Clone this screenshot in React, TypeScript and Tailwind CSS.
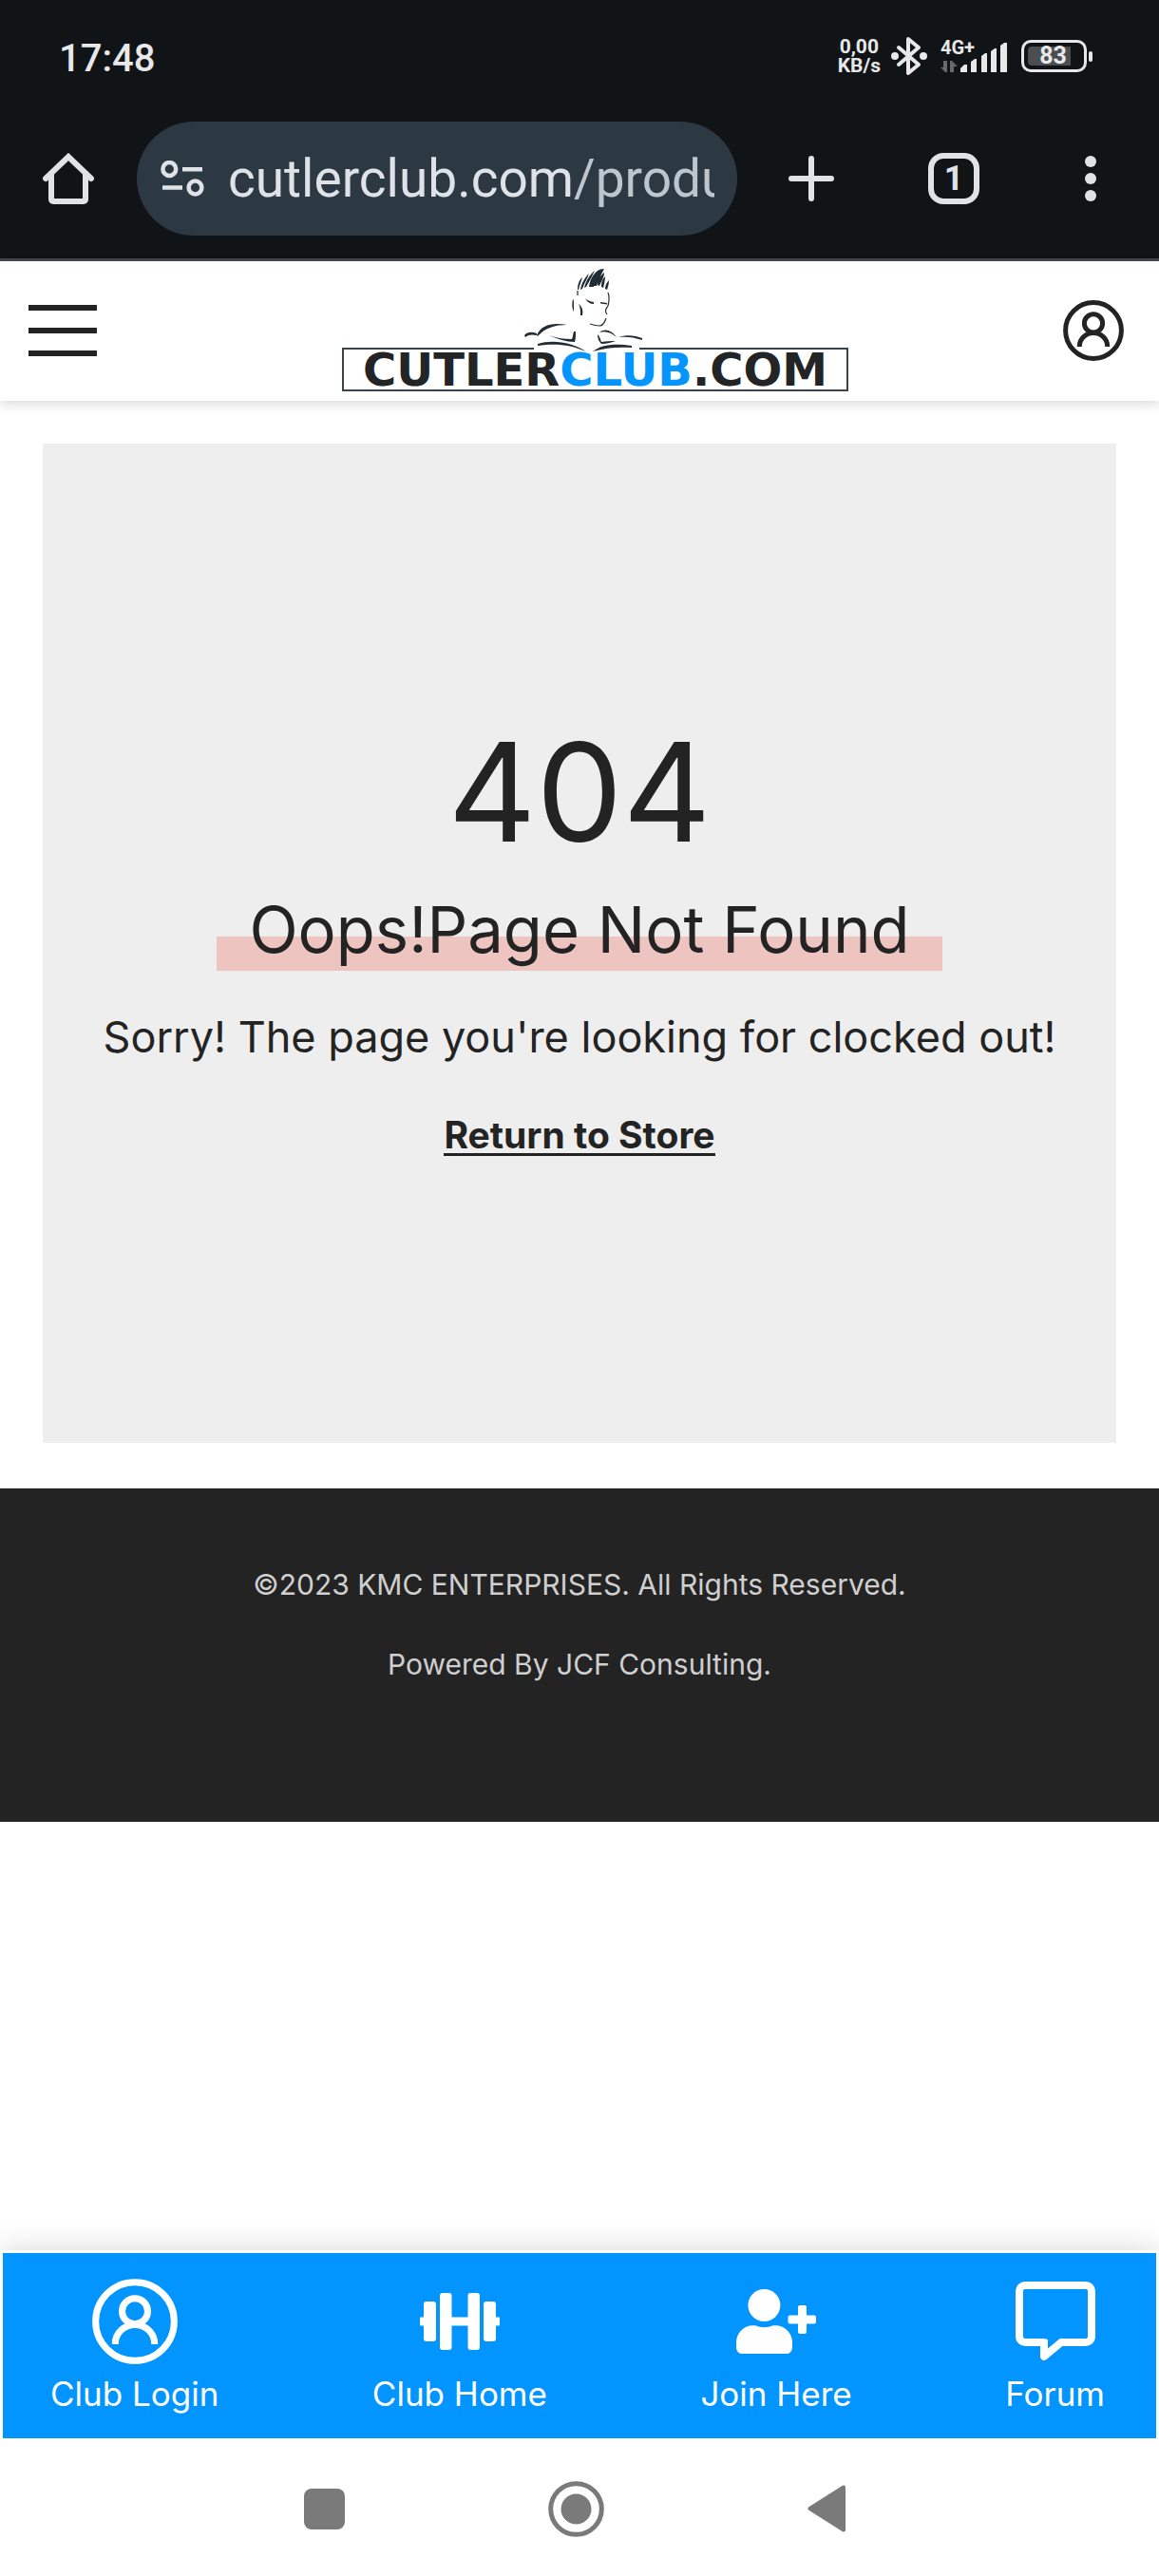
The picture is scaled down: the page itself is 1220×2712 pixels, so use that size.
import React from "react";

function AccountIcon({ className }: { className: string }) {
  return (
    <svg viewBox="0 0 64 64" fill="none" stroke="currentColor" strokeWidth="5" className={className} aria-hidden="true">
      <circle cx="32" cy="32" r="29.4" />
      <circle cx="32" cy="24.4" r="9.6" />
      <path d="M17.3 49v-0.5a14.7 14 0 0 1 29.4 0v0.5" />
    </svg>
  );
}

function DumbbellIcon() {
  return (
    <svg width="84" height="60" viewBox="0 0 84 60" fill="currentColor" aria-hidden="true">
      <rect x="0" y="25.5" width="6" height="9" rx="1" />
      <rect x="4" y="9" width="13" height="42" rx="3" />
      <rect x="21" y="0" width="12.5" height="60" rx="3" />
      <rect x="32" y="25.5" width="20" height="9" />
      <rect x="50.5" y="0" width="12.5" height="60" rx="3" />
      <rect x="67" y="9" width="13" height="42" rx="3" />
      <rect x="78" y="25.5" width="6" height="9" rx="1" />
    </svg>
  );
}

function UserPlusIcon() {
  return (
    <svg width="84" height="68" viewBox="0 0 84 68" fill="currentColor" aria-hidden="true">
      <circle cx="29.4" cy="17" r="17" />
      <path d="M17.6 38.2h2.3a23 23 0 0 0 19 0h2.3A17.7 17.7 0 0 1 59 56v5.7a6.3 6.3 0 0 1-6.3 6.3H6.3A6.3 6.3 0 0 1 0 61.700V56a17.7 17.7 0 0 1 17.6-17.8z" />
      <rect x="65" y="17" width="9" height="30" rx="2" />
      <rect x="54.5" y="27.5" width="29.5" height="9" rx="2" />
    </svg>
  );
}

function ForumIcon() {
  return (
    <svg width="84" height="84" viewBox="0 0 84 84" fill="none" stroke="currentColor" strokeWidth="8" aria-hidden="true">
      <path d="M10 4h64a6 6 0 0 1 6 6v48a6 6 0 0 1-6 6H48L30 79V64H10a6 6 0 0 1-6-6V10a6 6 0 0 1 6-6z" strokeLinejoin="round" />
      <path d="M30 61v18" />
    </svg>
  );
}

const navItems = [
  { label: "Club Login", icon: <AccountIcon className="size-[90px]" /> },
  { label: "Club Home", icon: <DumbbellIcon /> },
  { label: "Join Here", icon: <UserPlusIcon /> },
  { label: "Forum", icon: <ForumIcon /> },
];

function StatusBar() {
  return (
    <div className="flex h-20 items-start justify-between pt-[38px] pr-[70px] pl-[62px] text-[#e8e8e8]">
      <time className="text-[40px] leading-[48px] font-medium">17:48</time>
      <div className="flex h-[42px] items-center">
        <div className="mr-[11px] text-center text-[21px] leading-5 font-bold">
          <div>0,00</div>
          <div>KB/s</div>
        </div>
        <svg width="38" height="42" viewBox="0 0 38 42" fill="none" stroke="currentColor" strokeWidth="4" strokeLinejoin="round" strokeLinecap="round" aria-hidden="true">
          <path d="M8 12l21 18-11 9V3l11 9L8 30" />
          <circle cx="4" cy="21" r="2" fill="currentColor" />
          <circle cx="34" cy="21" r="2" fill="currentColor" />
        </svg>
        {/* Mobile signal */}
        <div className="relative ml-[14px] h-[42px] w-[70px]">
          <span className="absolute top-0.5 left-0 text-[20px] leading-5 font-bold">4G+</span>
          <svg width="70" height="42" viewBox="0 0 70 42" fill="currentColor" aria-hidden="true">
            <path d="M0 33h3v-7h4v12H5zM10 38V26h2l6 6h-4v6z" opacity="0.4" />
            <path d="M21 38v-4l4-4h3v8zM32 38V27l4-3h2v14zM43 38V21l4-3h2v20zM53 38V16l4-3h2v25zM63 38V10l4-3h3v31z" />
          </svg>
        </div>
        {/* Battery */}
        <div className="ml-[15px] flex items-center gap-0.5">
          <div className="flex h-[34px] w-[69px] items-center rounded-[10px] border-[3px] border-current p-1">
            <div className="h-5 w-[45px] rounded-l-sm bg-[#4b4e50] text-center text-[25px] leading-5 font-bold">
              <span className="pl-2">83</span>
            </div>
          </div>
          <div className="h-[11px] w-1 rounded-full bg-current" />
        </div>
      </div>
    </div>
  );
}

function BrowserBar() {
  return (
    <div className="flex items-center border-b-[3px] border-[#44484c] pt-12 pr-[66px] pb-6 pl-[45px] text-[#dfe2e7]">
      <button type="button" aria-label="Home">
        <svg width="54" height="54" viewBox="0 0 54 54" fill="none" stroke="currentColor" strokeWidth="6" strokeLinecap="round" aria-hidden="true">
          <path d="M3 27L27 4l24 23" strokeLinejoin="miter" />
          <path d="M9 24v25a2 2 0 0 0 2 2h32a2 2 0 0 0 2-2V24" />
        </svg>
      </button>
      <div className="ml-[45px] flex h-[120px] min-w-0 flex-1 items-center rounded-full bg-[#2c3943] pr-6 pl-[25px]">
        <button type="button" aria-label="Site information" className="shrink-0">
          <svg width="46" height="38" viewBox="0 0 46 38" fill="none" stroke="currentColor" strokeWidth="4.5" aria-hidden="true">
            <circle cx="9.3" cy="9" r="6.9" />
            <path d="M23 9.2h21M2 28.5h21" />
            <circle cx="36.5" cy="28.5" r="6.9" />
          </svg>
        </button>
        <a href="#" className="ml-[25px] min-w-0 flex-1 overflow-hidden text-[55px] leading-[72px] whitespace-nowrap">
          cutlerclub.com<span className="text-[#bdc5cd]">/produ</span>
        </a>
      </div>
      <button type="button" aria-label="New tab" className="ml-[54px]">
        <svg width="48" height="48" viewBox="0 0 48 48" stroke="currentColor" strokeWidth="6" strokeLinecap="round" aria-hidden="true">
          <path d="M24 3v42M3 24h42" />
        </svg>
      </button>
      <button type="button" aria-label="Open tabs" className="ml-[99px] size-[54px] rounded-2xl border-[6px] border-current text-[36px] leading-10 font-bold">
        1
      </button>
      <button type="button" aria-label="More options" className="ml-[111px] flex flex-col gap-1.5">
        <span className="size-3 rounded-full bg-current" />
        <span className="size-3 rounded-full bg-current" />
        <span className="size-3 rounded-full bg-current" />
      </button>
    </div>
  );
}

function Logo() {
  return (
    <a href="#" className="relative block w-[533px] pt-[83px]">
      <div className="flex h-[46px] items-center justify-center border-2 border-[#3a444c] font-['DejaVu_Sans',sans-serif] text-[48px] leading-none font-bold text-[#222426]">
        CUTLER<span className="text-[#0595ff]">CLUB</span>.COM
      </div>
      {/* Figure rising over the frame */}
      <svg viewBox="530 275 160 100" className="absolute -top-2 left-[170px] h-[100px] w-[160px]" aria-hidden="true">
        <path d="M562 364h111v4H562z" fill="#fff" />
        <g fill="#222c34">
          <path d="M608 305c0-6 2-11 5-13-1 4-3 8-4 13zM611 305c1-7 5-13 9-17-2 6-5 10-7 16zM615 303c2-8 6-14 11-18-3 6-6 12-9 17zM620 302c1-9 7-19 15-19-5 7-9 13-10 19zM624 301c1-8 6-17 12-18-4 7-6 13-8 18zM629 300c1-7 4-11 7-13 0 5-3 9-5 14zM633 302c0-6 2-9 4-11 0 4-1 8-2 12zM637 304c0-4 2-7 4-9 0 4-1 7-2 10z" />
          <path d="M603 315c1 0 1 3 1 6v7c-2-3-2-9-1-13zM609 320c4 3 5 7 4 12h-2c0-5 0-8-2-12zM616 314c3 3 5 3 9 4v2c-4 0-7-2-9-6zM632 318l7 1v1.5l-7-1z" />
          <path d="M565 353c4-11 17-14 32-11-13 0-23 3-31 12zM552 353c3-4 8-4 13-2v2c-5-1-9-1-12 2zM578 353c9 3 16 4 24 4 1-2 1-5 2-8h2c0 4 0 8-1 11-9 0-18-3-27-7zM566 362c17-5 37-1 51 8-16-7-32-9-51-6zM624 370c8-7 23-9 41-6v2c-14-1-28 0-41 4zM631 350c6-5 13-2 18 5-6-5-11-7-18-5zM629 352c3 3 3 6 4 8 5-1 10-1 15-1-5 2-10 3-15 3-3-3-4-6-4-10zM651 355c8-3 18-2 25 1v2c-9-3-16-4-25-3z" />
        </g>
        <path d="M608 306v5M640 308c2 5 1 10 0 14-2 3-4 5-1 9M638 335c-2 6-4 8-7 8-4 0-7-1-10-2" fill="none" stroke="#222c34" strokeWidth="1.2" />
      </svg>
    </a>
  );
}

export default function App() {
  return (
    <div className="flex min-h-screen flex-col bg-white font-[Inter,sans-serif] text-[#232323]">
      <div className="bg-[#101417] font-[Roboto,sans-serif]">
        <StatusBar />
        <BrowserBar />
      </div>

      <header className="flex items-center justify-between pt-2 pr-[37px] pb-2.5 pl-[30px] shadow-[0_3px_12px_rgba(0,0,0,0.16)]">
        <button type="button" aria-label="Menu" className="flex flex-col gap-[18px] pr-8">
          <span className="h-1.5 w-[72px] bg-[#232323]" />
          <span className="h-1.5 w-[72px] bg-[#232323]" />
          <span className="h-1.5 w-[72px] bg-[#232323]" />
        </button>
        <Logo />
        <a href="#" aria-label="Account">
          <AccountIcon className="size-16" />
        </a>
      </header>

      <main className="px-[45px] pt-[45px] pb-12">
        <section className="flex flex-col items-center bg-[#eeeeee] pt-[295px] pb-[302px] text-center">
          <h1 className="text-[144px] leading-[144px]">404</h1>
          <h2 className="relative mt-[30px] px-[34px] text-[67px] leading-[86px]">
            <span className="absolute inset-x-0 bottom-0 h-9 bg-[#eec4c1]" />
            <span className="relative">Oops!Page Not Found</span>
          </h2>
          <p className="mt-10 text-[45px] leading-[60px]">Sorry! The page you're looking for clocked out!</p>
          <a href="#" className="mt-[54px] border-b-[3px] border-current text-[39px] leading-[38px] font-bold">
            Return to Store
          </a>
        </section>
      </main>

      <footer className="flex flex-col items-center gap-[42px] bg-[#232323] pt-20 pb-[145px] text-center text-[30px] leading-[42px] text-[#cfcfcf]">
        <p>©2023 KMC ENTERPRISES. All Rights Reserved.</p>
        <p>Powered By JCF Consulting.</p>
      </footer>

      <nav className="mt-auto flex justify-between border-[3px] border-white bg-[#0395ff] py-[27px] pr-[54px] pl-[50px] text-white shadow-[0_0_30px_rgba(0,0,0,0.16)]">
        {navItems.map((item) => (
          <a key={item.label} href="#" className="flex flex-col items-center gap-[11px] text-[35px] leading-10">
            <span className="flex h-[90px] items-center">{item.icon}</span>
            {item.label}
          </a>
        ))}
      </nav>

      {/* Android navigation keys */}
      <div className="relative flex h-[142px] items-center justify-center gap-[214px] bg-white pr-2.5 text-[#7a7a7a]">
        <button type="button" aria-label="Recent apps" className="size-[43px] rounded-lg bg-current" />
        <button type="button" aria-label="Home screen">
          <svg width="59" height="59" viewBox="0 0 59 59" aria-hidden="true">
            <circle cx="29.5" cy="29.5" r="26.8" fill="none" stroke="currentColor" strokeWidth="5" />
            <circle cx="29.5" cy="29.5" r="16" fill="currentColor" />
          </svg>
        </button>
        <button type="button" aria-label="Back">
          <svg width="40" height="50" viewBox="0 0 40 50" fill="currentColor" stroke="currentColor" strokeWidth="4" strokeLinejoin="round" aria-hidden="true">
            <path d="M38 2.5v45L2.5 25z" />
          </svg>
        </button>
      </div>
    </div>
  );
}
